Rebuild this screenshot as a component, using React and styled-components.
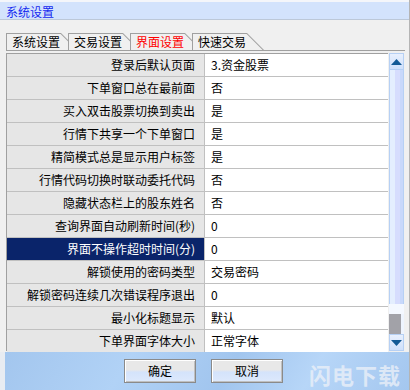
import React from 'react';
import styled, { createGlobalStyle } from 'styled-components';

const rows = [
  ['登录后默认页面', '3.资金股票'],
  ['下单窗口总在最前面', '否'],
  ['买入双击股票切换到卖出', '是'],
  ['行情下共享一个下单窗口', '是'],
  ['精简模式总是显示用户标签', '是'],
  ['行情代码切换时联动委托代码', '否'],
  ['隐藏状态栏上的股东姓名', '否'],
  ['查询界面自动刷新时间(秒)', '0'],
  ['界面不操作超时时间(分)', '0'],
  ['解锁使用的密码类型', '交易密码'],
  ['解锁密码连续几次错误程序退出', '0'],
  ['最小化标题显示', '默认'],
  ['下单界面字体大小', '正常字体'],
];

const tabs = ['系统设置', '交易设置', '界面设置', '快速交易'];

export default function App() {
  return (
    <>
      <GlobalStyle />
      <Window>
        <TitleBar>系统设置</TitleBar>
        <Body>
          <TabStrip>
            {tabs.map((t, i) => (
              <Tab key={t} $index={i}>
                <TabFace $active={i === 2}>{t}</TabFace>
              </Tab>
            ))}
          </TabStrip>
          <Panel>
            <Grid>
              {rows.map(([label, value], i) => (
                <React.Fragment key={label}>
                  <Label $selected={i === 8}>{label}</Label>
                  <Value>{value}</Value>
                </React.Fragment>
              ))}
            </Grid>
            <ScrollBar>
              <ArrowButton>
                <svg width="11" height="6" viewBox="0 0 11 6">
                  <path d="M0 6 L5.5 0 L11 6 Z" fill="#135a96" />
                </svg>
              </ArrowButton>
              <Thumb />
              <TrackGap />
              <GrayBlock />
              <ArrowButton>
                <svg width="11" height="6" viewBox="0 0 11 6">
                  <path d="M0 0 L5.5 6 L11 0 Z" fill="#135a96" />
                </svg>
              </ArrowButton>
            </ScrollBar>
          </Panel>
        </Body>
        <Footer>
          <Button>确定</Button>
          <Button>取消</Button>
          <Watermark>闪电下载</Watermark>
        </Footer>
      </Window>
    </>
  );
}

const GlobalStyle = createGlobalStyle`
  body {
    margin: 0;
    background: #f0f0f0;
    font-family: "Noto Sans CJK SC", "Liberation Sans", sans-serif;
    font-size: 12px;
  }
`;

const Window = styled.div`
  width: 410px;
  height: 390px;
  display: flex;
  flex-direction: column;
  background: #f0f0f0;
  border-right: 1px solid #b4b4b4;
  box-sizing: border-box;
  overflow: hidden;
`;

const TitleBar = styled.div`
  height: 20px;
  box-sizing: border-box;
  padding: 3px 0 0 6px;
  border-top: 2px solid #f4f6fa;
  border-bottom: 1px solid #bcc8d8;
  background: #d3e3fc;
  color: #1428f0;
  font-size: 12px;
  line-height: 14px;
`;

const Body = styled.div`
  display: flex;
  flex-direction: column;
  padding: 13px 4px 0 6px;
`;

const TabStrip = styled.div`
  display: flex;
  height: 17px;
  border-bottom: 1px solid #a0a0a0;
`;

const Tab = styled.div`
  position: relative;
  z-index: ${(p) => p.$index + 1};
  width: 72px;
  height: 17px;
  margin-right: -10px;
  background: #a0a0a0;
  clip-path: polygon(0 0, 55px 0, 72px 17px, 0 17px);
`;

const TabFace = styled.div`
  height: 16px;
  margin: 1px 0 0 1px;
  padding-left: 5px;
  background: #f0f0f0;
  clip-path: polygon(0 0, 53.6px 0, 70.6px 17px, 0 17px);
  color: ${(p) => (p.$active ? '#ff0000' : '#000')};
  font-size: 12px;
  line-height: 16px;
`;

const Panel = styled.div`
  display: flex;
  margin-top: 2px;
  height: 298px;
`;

const Grid = styled.div`
  display: grid;
  grid-template-columns: 198px 183px;
  grid-auto-rows: 23px;
  border-left: 1px solid #a0a0a0;
  border-top: 1px solid #a0a0a0;
  align-content: start;
`;

const Label = styled.div`
  box-sizing: border-box;
  padding-right: 9px;
  background: ${(p) => (p.$selected ? '#0a246a' : '#e6e6e6')};
  color: ${(p) => (p.$selected ? '#fff' : '#000')};
  border-bottom: 1px solid #c0c0c0;
  border-right: 1px solid #c0c0c0;
  text-align: right;
  line-height: 22px;
  white-space: nowrap;
`;

const Value = styled.div`
  box-sizing: border-box;
  padding-left: 6px;
  background: #fff;
  border-bottom: 1px solid #c0c0c0;
  line-height: 22px;
  white-space: nowrap;
`;

const ScrollBar = styled.div`
  display: flex;
  flex-direction: column;
  width: 15px;
  margin-left: 1px;
  background: #eef4fe;
`;

const ArrowButton = styled.div`
  height: 17px;
  display: flex;
  align-items: center;
  justify-content: center;
  box-sizing: border-box;
  border: 1px solid #b6d0f4;
  background: linear-gradient(#e8f0fe, #cfe0fb);
`;

const Thumb = styled.div`
  flex: 1;
  border-left: 1px solid #b6d0f4;
  border-right: 1px solid #b6d0f4;
  background: linear-gradient(90deg, #e4eefe 0 40%, #d6dcfd 40% 80%, #c8d8fb 80%);
`;

const TrackGap = styled.div`
  height: 10px;
  background: #f4f8ff;
`;

const GrayBlock = styled.div`
  height: 20px;
  margin-right: 3px;
  background: #a2a2a8;
`;

const Footer = styled.div`
  position: relative;
  flex: 1;
  display: flex;
  gap: 15px;
  padding: 7px 0 0 119px;
  margin-top: 1px;
  background: linear-gradient(120deg, #a3c6ee 0%, #b1d2f6 30%, #a1c5ee 55%, #b7d6f8 75%, #a4c7ef 100%);
  border-left: 5px solid #e8ecf2;
`;

const Button = styled.div`
  width: 72px;
  height: 24px;
  box-sizing: border-box;
  border: 1px solid #8a8a8a;
  box-shadow: inset 1px 1px 0 #fff, inset -1px -1px 0 #c0c0c0;
  background: linear-gradient(#e8e8e8 0 45%, #d4e3fb 55%, #dde9fc);
  text-align: center;
  line-height: 22px;
  font-size: 12px;
`;

const Watermark = styled.div`
  position: absolute;
  right: 8px;
  top: 6px;
  color: rgba(235, 240, 248, 0.8);
  font-size: 22px;
  font-weight: bold;
  letter-spacing: 1px;
`;
